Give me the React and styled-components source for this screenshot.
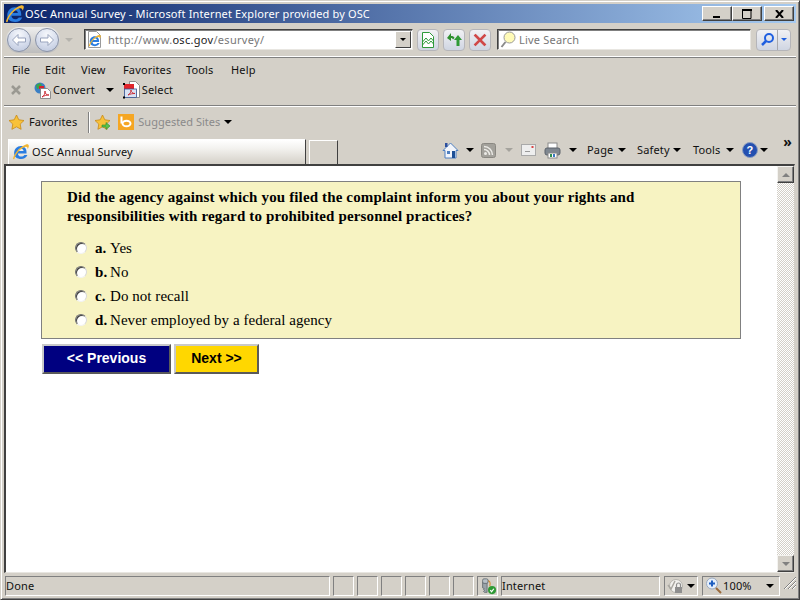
import React from "react";
import styled, { createGlobalStyle } from "styled-components";

const chrome = "#d4d0c8";
const uiFont = `"Noto Sans", "DejaVu Sans", sans-serif`;

const Global = createGlobalStyle`
  html, body { margin: 0; padding: 0; background: ${chrome}; overflow: hidden; }
  * { box-sizing: border-box; }
`;

const Frame = styled.div`
  width: 800px;
  height: 600px;
  background: ${chrome};
  display: flex;
  flex-direction: column;
  font-family: ${uiFont};
  font-size: 11px;
  letter-spacing: 0.15px;
  color: #111;
  padding: 4px;
  border: 1px solid;
  border-color: ${chrome} #404040 #404040 ${chrome};
  box-shadow: inset 1px 1px 0 #fff, inset -1px -1px 0 #808080;
`;

/* title bar */
const TitleBar = styled.div`
  height: 19px;
  flex: none;
  display: flex;
  align-items: center;
  margin: -1px -1px 0;
  padding: 0 2px 0 2px;
  background: linear-gradient(90deg, #0a246a 0%, #a6caf0 100%);
  color: #fff;
  font-size: 11px;
`;
const TitleText = styled.span`
  margin-left: 1px;
  flex: 1;
  white-space: nowrap;
`;
const WinButton = styled.div`
  width: ${({ $w }) => $w}px;
  height: 15px;
  margin-left: ${({ $gap }) => $gap || 0}px;
  background: ${chrome};
  border: 1px solid;
  border-color: #fff #404040 #404040 #fff;
  box-shadow: inset -1px -1px 0 #808080;
  display: flex;
  align-items: center;
  justify-content: center;
`;

/* address row */
const AddressRow = styled.div`
  height: 34px;
  flex: none;
  display: flex;
  align-items: center;
  margin: 0 -1px;
  padding: 0 0 0 2px;
  border-bottom: 1px solid #fff;
  box-shadow: 0 1px 0 #808080;
`;
const NavCapsule = styled.div`
  width: 54px;
  height: 26px;
  border-radius: 13px;
  background: linear-gradient(#eeeeee, #bdbdbd);
  display: flex;
  align-items: center;
  justify-content: space-between;
  padding: 0 1px;
  flex: none;
`;
const NavCircle = styled.div`
  width: 24px;
  height: 24px;
  border-radius: 50%;
  border: 1px solid #8a93a8;
  background: radial-gradient(circle at 50% 25%, #f6f8fc 0%, #d5dcec 55%, #b9c3da 100%);
  display: flex;
  align-items: center;
  justify-content: center;
`;
const SunkenField = styled.div`
  height: 21px;
  width: ${({ $w }) => $w}px;
  margin-left: ${({ $gap }) => $gap || 0}px;
  flex: none;
  background: #fff;
  border: 1px solid;
  border-color: #404040 #e8e6e1 #e8e6e1 #404040;
  box-shadow: inset 1px 1px 0 #808080;
  display: flex;
  align-items: center;
  padding-left: 2px;
`;
const UrlText = styled.span`
  margin-left: 6px;
  flex: 1;
  color: #777;
  letter-spacing: 0.3px;
  b { font-weight: 400; color: #222; }
`;
const ComboArrow = styled.div`
  width: 16px;
  height: 17px;
  background: ${chrome};
  border: 1px solid;
  border-color: #fff #404040 #404040 #fff;
  display: flex;
  align-items: center;
  justify-content: center;
  margin-right: 1px;
`;
const SquareButton = styled.div`
  width: 22px;
  height: 22px;
  margin-left: ${({ $gap }) => $gap || 4}px;
  flex: none;
  border: 1px solid #b5b5b9;
  border-radius: 4px;
  background: linear-gradient(#f1f1f4, #cfd5e2);
  display: flex;
  align-items: center;
  justify-content: center;
`;
const SearchText = styled.span`
  margin-left: 3px;
  color: #777;
  letter-spacing: 0.2px;
`;
const SearchButton = styled.div`
  width: 35px;
  height: 22px;
  margin-left: 5px;
  flex: none;
  border: 1px solid #b5b5b9;
  border-radius: 4px;
  background: linear-gradient(#f1f1f4, #cfd5e2);
  display: grid;
  grid-template-columns: 20px 1fr;
  & > div {
    display: flex;
    align-items: center;
    justify-content: center;
  }
  & > div + div { border-left: 1px solid #a8a8ac; }
`;

/* menu + command rows */
const MenuRow = styled.div`
  height: 23px;
  flex: none;
  display: flex;
  align-items: center;
  margin-top: 1px;
  padding: 0 0 0 7px;
`;
const MenuItem = styled.span`
  width: ${({ $w }) => $w}px;
  flex: none;
  color: #111;
`;
const ConvertRow = styled.div`
  height: 25px;
  flex: none;
  display: flex;
  align-items: center;
  padding: 0 0 6px 7px;
  margin: 0 -1px;
  border-bottom: 1px solid #808080;
  box-shadow: 0 1px 0 #fff;
`;
const ToolLabel = styled.span`
  margin-left: ${({ $gap }) => $gap ?? 2}px;
  margin-top: -2px;
`;
const Spacer = styled.span`
  width: ${({ $w }) => $w}px;
  flex: none;
`;
const FavRow = styled.div`
  height: 32px;
  flex: none;
  display: flex;
  align-items: center;
  padding: 0 0 0 3px;
`;
const Divider = styled.div`
  width: 1px;
  height: 21px;
  margin: 0 5px 0 11px;
  background: #808080;
  box-shadow: 1px 0 0 #fff;
`;
const MutedLabel = styled.span`
  margin-left: 4px;
  margin-top: -2px;
  color: #8a8a8a;
  letter-spacing: 0;
`;

/* tab row with the command bar on its right side */
const TabRow = styled.div`
  height: 26px;
  flex: none;
  display: flex;
  align-items: flex-end;
  padding-left: 3px;
`;
const Tab = styled.div`
  width: 298px;
  height: 25px;
  flex: none;
  display: flex;
  align-items: center;
  padding: 0 0 0 4px;
  border-top: 1px solid #fff;
  border-right: 1px solid #404040;
  border-left: 1px solid #fff;
  background: linear-gradient(#fff 0%, #f3f2ef 35%, ${chrome} 100%);
`;
const NewTab = styled.div`
  width: 29px;
  height: 24px;
  margin-left: 3px;
  flex: none;
  border-top: 1px solid #fff;
  border-left: 1px solid #fff;
  border-right: 1px solid #404040;
`;
const CommandBar = styled.div`
  flex: 1;
  height: 26px;
  display: flex;
  align-items: center;
  padding: 0 0 2px 104px;
  position: relative;
`;
const CommandLabel = styled.span`
  width: ${({ $w }) => $w}px;
  flex: none;
  margin-left: ${({ $gap }) => $gap || 0}px;
  margin-top: -2px;
`;
const Arrow = styled.span`
  flex: none;
  width: 0;
  height: 0;
  margin-left: ${({ $gap }) => $gap || 0}px;
  border-left: ${({ $size }) => $size || 4}px solid transparent;
  border-right: ${({ $size }) => $size || 4}px solid transparent;
  border-top: ${({ $size }) => $size || 4}px solid ${({ $color }) => $color || "#000"};
`;
const Overflow = styled.span`
  position: absolute;
  right: 3px;
  top: -2px;
  font-size: 14px;
  font-weight: 700;
  line-height: 12px;
`;

/* page viewport */
const Viewport = styled.div`
  flex: 1;
  min-height: 0;
  display: flex;
  background: #fff;
  margin-left: -1px;
  border-top: 2px solid #404040;
  border-left: 2px solid #404040;
  border-right: 1px solid ${chrome};
  border-bottom: 1px solid #e8e6e1;
`;
const Page = styled.main`
  flex: 1;
  padding: 15px 0 0 35px;
  font-family: "Liberation Serif", "Times New Roman", serif;
  font-size: 15px;
  letter-spacing: 0.05px;
  color: #000;
`;
const QuestionCard = styled.section`
  width: 700px;
  height: 158px;
  background: #f7f3c2;
  border: 1px solid #808080;
  padding: 6px 0 0 25px;
`;
const Question = styled.h2`
  margin: 0 0 10px;
  font-size: 15px;
  line-height: 19px;
  font-weight: 700;
  letter-spacing: 0.14px;
`;
const OptionRow = styled.label`
  display: flex;
  align-items: center;
  height: 24px;
  padding-left: 8px;
`;
const Radio = styled.span`
  width: 12px;
  height: 12px;
  border-radius: 50%;
  background: #fff;
  border: 1px solid;
  border-color: #6f6f6f #d8d8d8 #f2f2f2 #6f6f6f;
  box-shadow: inset 1px 1px 0 #404040;
  margin-right: 8px;
  flex: none;
`;
const OptionKey = styled.b`
  min-width: 15px;
`;
const ButtonRow = styled.div`
  display: flex;
  margin-top: 5px;
  padding-left: 1px;
  gap: 3px;
`;
const SurveyButton = styled.button`
  width: ${({ $w }) => $w}px;
  height: 30px;
  padding: 0 0 2px;
  background: ${({ $primary }) => ($primary ? "#000080" : "#ffd700")};
  color: ${({ $primary }) => ($primary ? "#fff" : "#000")};
  border: 2px solid;
  border-color: #c9c9c9 #5a5a5a #5a5a5a #c9c9c9;
  font-family: "Liberation Sans", Arial, sans-serif;
  font-size: 14px;
  font-weight: 700;
`;

const ScrollBar = styled.div`
  width: 17px;
  flex: none;
  display: flex;
  flex-direction: column;
  background: repeating-conic-gradient(#fff 0 25%, ${chrome} 0 50%) 0 0 / 2px 2px;
`;
const ScrollButton = styled.div`
  height: 17px;
  background: ${chrome};
  border: 1px solid;
  border-color: #f4f3f0 #404040 #404040 #f4f3f0;
  box-shadow: inset -1px -1px 0 #808080;
  display: flex;
  align-items: center;
  justify-content: center;
`;
const ScrollTrack = styled.div`
  flex: 1;
`;
const ScrollArrow = styled.span`
  width: 0;
  height: 0;
  border-left: 4px solid transparent;
  border-right: 4px solid transparent;
  ${({ $up }) => ($up ? "border-bottom: 4px solid #808080;" : "border-top: 4px solid #808080;")}
`;

/* status bar */
const StatusBar = styled.footer`
  height: 20px;
  flex: none;
  display: flex;
  align-items: stretch;
  gap: 3px;
  margin: 3px 0 -1px;
`;
const Cell = styled.div`
  width: ${({ $w }) => $w}px;
  flex: none;
  margin-left: ${({ $gap }) => $gap || 0}px;
  height: 20px;
  display: flex;
  align-items: center;
  padding-left: ${({ $pad }) => $pad || 0}px;
  border: 1px solid;
  border-color: #808080 #fff #fff #808080;
  white-space: nowrap;
`;
const Grip = styled.div`
  width: 16px;
  margin-left: auto;
  height: 20px;
  flex: none;
`;

const IEMark = () => (
  <>
    <path d="M2 9.200c0-4 2.700-6.600 6-6.600 3 0 5 2.200 5 5.400v1.300H5.300c.2 1.700 1.300 2.800 3 2.800 1.200 0 2.100-.5 2.800-1.400h2.700c-1 2.400-3 3.600-5.600 3.600C4.600 14.300 2 12.500 2 9.200zm3.400-2h5c-.2-1.300-1.100-2.200-2.400-2.200s-2.300.9-2.600 2.200z" fill="#2a7de1" />
    <path d="M1 13.800C2.500 8.500 7.500 3 12.500 1.300c1.700-.6 2.800.2 2.500 1.800-.1.800-.5 1.600-1 2.400.1-1.400-.6-2.300-2-2C8 4.300 3.500 9 2.200 14.300c-.5.400-1 .1-1.200-.5z" fill="#f2b632" />
  </>
);
const IELogo = ({ size = 16 }) => (
  <svg width={size} height={size} viewBox="1 1 14.200 14">
    <IEMark />
  </svg>
);

const NavArrow = ({ flip }) => (
  <svg width="16" height="14" viewBox="0 0 16 14" style={flip ? { transform: "scaleX(-1)" } : undefined}>
    <path d="M7 1.500 1.500 7 7 12.500V9h7.500V5H7z" fill="#fff" stroke="#98a3bd" strokeWidth="1" />
  </svg>
);

const PageIcon = () => (
  <svg width="15" height="17" viewBox="0 0 15 17">
    <path d="M1.500.5h8l4 4v12h-12z" fill="#fff" stroke="#9a9a9a" />
    <g transform="translate(1 3) scale(.85)"><IEMark /></g>
  </svg>
);

const Star = ({ size = 17, arrow }) => (
  <svg width={size} height={size} viewBox="0 0 17 17">
    <path d="M8.500 1l2.300 4.800 5.200.7-3.800 3.600.9 5.200-4.600-2.500-4.600 2.500.9-5.200L1 6.500l5.200-.7z" fill="#f8c23a" stroke="#c98a14" strokeWidth=".8" />
    {arrow && <path d="M8 11h4V8.500l4 3.500-4 3.500V13H8z" fill="#5cc24a" stroke="#2e8b2a" strokeWidth=".6" />}
  </svg>
);

const PdfGlobe = () => (
  <svg width="17" height="17" viewBox="0 0 17 17">
    <circle cx="6" cy="6" r="5.500" fill="#3b7fc4" />
    <path d="M2 3l4-2 2 2-2 3-3 1zM7 8l3 1-1 2.500H7z" fill="#3aa54a" />
    <rect x="5" y="4" width="5" height="3" fill="#d8232a" />
    <path d="M6.500 6.500h7l3 3v7h-10z" fill="#fff" stroke="#777" strokeWidth=".8" />
    <path d="M8 15c2-1 3-3 3-6 0 3 1.500 4 4 4-2.500 0-5 .7-7 2z" fill="none" stroke="#c8222a" strokeWidth=".9" />
  </svg>
);
const PdfSelect = () => (
  <svg width="17" height="18" viewBox="0 0 17 18">
    <path d="M6.500.5h6l4 4v12h-10z" fill="#fff" stroke="#777" strokeWidth=".8" />
    <rect x="1" y="3" width="10" height="5" fill="#e0242a" />
    <rect x="1.500" y="8" width="12" height="8.500" fill="#d9e2f3" stroke="#33508f" strokeWidth=".8" />
    <path d="M5 14c2-1 3-3 3-5 0 2 1.500 3.500 4 3.500-2.500 0-5 .5-7 1.500z" fill="none" stroke="#c8222a" strokeWidth=".9" />
    <rect x="0" y="15.500" width="2" height="2" fill="#000" />
    <rect x="0" y="2" width="2" height="2" fill="#000" />
  </svg>
);
const BingIcon = () => (
  <svg width="16" height="16" viewBox="0 0 16 16">
    <rect width="16" height="16" fill="#f5a623" />
    <ellipse cx="8.500" cy="9.500" rx="4" ry="2.800" fill="none" stroke="#fff" strokeWidth="2" />
    <rect x="2.500" y="2.500" width="2" height="7" fill="#fff" />
  </svg>
);

const HomeIcon = () => (
  <svg width="17" height="17" viewBox="0 0 17 17">
    <path d="M8.500 1 16 8.500h-2V16H3V8.500H1z" fill="#f2f5fb" stroke="#4f7fc0" strokeWidth="1" />
    <rect x="3" y="1" width="2.500" height="4" fill="#2c4f9e" />
    <rect x="5" y="9" width="3" height="3" fill="#4f7fc0" />
    <rect x="10" y="9" width="3" height="7" fill="#1d4f96" />
  </svg>
);
const RssIcon = () => (
  <svg width="15" height="15" viewBox="0 0 15 15">
    <rect x=".5" y=".5" width="14" height="14" rx="2" fill="#a3a19b" stroke="#8a8882" />
    <circle cx="4.500" cy="10.500" r="1.500" fill="#ecebe7" />
    <path d="M3 6.500a5.500 5.500 0 0 1 5.500 5.500M3 3.500A8.500 8.500 0 0 1 11.500 12" fill="none" stroke="#ecebe7" strokeWidth="1.500" />
  </svg>
);
const MailIcon = () => (
  <svg width="15" height="12" viewBox="0 0 15 12">
    <rect x=".5" y=".5" width="14" height="11" fill="#eeeeee" stroke="#a9a9a9" />
    <rect x="4" y="7" width="5" height="1" fill="#999" />
    <rect x="10.500" y="2" width="2" height="2" fill="#d84545" />
  </svg>
);
const PrintIcon = () => (
  <svg width="17" height="17" viewBox="0 0 17 17">
    <rect x="4" y="1" width="9" height="6" fill="#fff" stroke="#8a8a8a" />
    <rect x="1" y="6" width="15" height="7" rx="2" fill="#7f8790" stroke="#5c636b" />
    <rect x="4" y="11" width="9" height="5" fill="#fff" stroke="#8a8a8a" />
    <rect x="6" y="12" width="2" height="3" fill="#2f8f4f" />
    <rect x="9" y="12" width="2" height="3" fill="#3a76c4" />
  </svg>
);
const HelpIcon = () => (
  <svg width="16" height="16" viewBox="0 0 16 16">
    <circle cx="8" cy="8" r="7.500" fill="#2450b0" stroke="#8b9dc0" />
    <text x="8" y="12" fontSize="11" fontWeight="700" fontFamily="Liberation Sans" fill="#fff" textAnchor="middle">?</text>
  </svg>
);
const MagnifierBlue = () => (
  <svg width="15" height="15" viewBox="0 0 15 15">
    <circle cx="9" cy="6" r="4" fill="none" stroke="#1f5fe0" strokeWidth="2" />
    <path d="M6 9l-4 4" stroke="#1f5fe0" strokeWidth="2.500" />
  </svg>
);
const MagnifierLive = () => (
  <svg width="16" height="18" viewBox="0 0 16 18">
    <circle cx="9.500" cy="6.500" r="5.500" fill="#fffbb8" stroke="#9a9a9a" />
    <path d="M5.500 11 1.500 16" stroke="#8a8a8a" strokeWidth="2" />
  </svg>
);
const CompatIcon = () => (
  <svg width="14" height="16" viewBox="0 0 14 16">
    <path d="M1.500.5h7l4 4v11h-11z" fill="#fff" stroke="#2e9a3a" />
    <path d="M1.500 10 5 6l2.500 3L10 6l2.500 3M1.500 13 5 9l2.500 3L10 9l2.500 3" fill="none" stroke="#2e9a3a" />
  </svg>
);
const RefreshIcon = () => (
  <svg width="17" height="15" viewBox="0 0 17 15">
    <path d="M1 6l4-5v3c2 0 3 .5 3.500 2L7 7.500C6.500 6.500 6 6 5 6v3z" fill="#2f8f2f" />
    <path d="M16 8l-4-5-4 5h2.500v6h3V8z" fill="#2f9a35" />
  </svg>
);
const StopIcon = () => (
  <svg width="14" height="14" viewBox="0 0 14 14">
    <path d="M2.500 2.500l9 9M11.500 2.500l-9 9" stroke="#d04848" strokeWidth="2.600" strokeLinecap="square" />
  </svg>
);
const KeyIcon = () => (
  <svg width="20" height="19" viewBox="0 0 20 19">
    <path d="M4 5h5v11H6l-1-1 1-1-1-1 1-1-2-1z" fill="#9aa2a8" stroke="#555d63" strokeWidth=".8" />
    <path d="M9 3c3 0 4 2 3 6" fill="none" stroke="#d98a2a" strokeWidth="1.200" />
    <rect x="4" y="1" width="6" height="5" rx="1.500" fill="#b8c0c6" stroke="#555d63" strokeWidth=".8" />
    <circle cx="14.500" cy="13.500" r="4.500" fill="#2f9a35" />
    <path d="M12.500 13.500l1.500 1.800 2.500-3.300" fill="none" stroke="#fff" strokeWidth="1.300" />
  </svg>
);
const LockIcon = () => (
  <svg width="18" height="16" viewBox="0 0 18 16">
    <circle cx="9" cy="8" r="6.500" fill="#f2f1ee" stroke="#b5b3ad" />
    <path d="M1 7l3 4 4-8" fill="none" stroke="#a9a7a1" strokeWidth="1.500" />
    <rect x="8" y="9" width="7" height="6" fill="#8e8e8e" />
    <path d="M9.500 9V7a2 2 0 0 1 4 0v2" fill="none" stroke="#8e8e8e" strokeWidth="1.200" />
  </svg>
);
const ZoomIcon = () => (
  <svg width="18" height="18" viewBox="0 0 18 18">
    <circle cx="7" cy="6.500" r="5.500" fill="#e6effa" stroke="#9aa9bf" />
    <path d="M7 3.500v6M4 6.500h6" stroke="#1f5fc0" strokeWidth="2" />
    <path d="M11 11l5 5" stroke="#9a6a3a" strokeWidth="2" />
  </svg>
);
const GripIcon = () => (
  <svg width="14" height="14" viewBox="0 0 14 14">
    <path d="M13 1 1 13M13 5 5 13M13 9 9 13" stroke="#808080" strokeWidth="1" />
    <path d="M13 2 2 13M13 6 6 13M13 10 10 13" stroke="#fff" strokeWidth="1" />
  </svg>
);

export default function App() {
  return (
    <Frame>
      <Global />
      <TitleBar>
        <IELogo size={18} />
        <TitleText>OSC Annual Survey - Microsoft Internet Explorer provided by OSC</TitleText>
        <WinButton $w={30}>
          <svg width="8" height="9" viewBox="0 0 8 9"><rect y="7" width="7" height="2" /></svg>
        </WinButton>
        <WinButton $w={30}>
          <svg width="10" height="10" viewBox="0 0 10 10"><path d="M.5 1.500h8.500v8H.5z" fill="none" stroke="#000" /><rect width="10" height="2" /></svg>
        </WinButton>
        <WinButton $w={30} $gap={2}>
          <svg width="9" height="8" viewBox="0 0 9 8"><path d="M1 0l7 8M8 0 1 8" stroke="#000" strokeWidth="2" /></svg>
        </WinButton>
      </TitleBar>

      <AddressRow>
        <NavCapsule>
          <NavCircle><NavArrow /></NavCircle>
          <NavCircle><NavArrow flip /></NavCircle>
        </NavCapsule>
        <Arrow $gap={5} $color="#b5b3ad" />
        <SunkenField $w={329} $gap={11}>
          <PageIcon />
          <UrlText>http://www.<b>osc.gov</b>/esurvey/</UrlText>
          <ComboArrow><Arrow $size={3} /></ComboArrow>
        </SunkenField>
        <SquareButton><CompatIcon /></SquareButton>
        <SquareButton><RefreshIcon /></SquareButton>
        <SquareButton><StopIcon /></SquareButton>
        <SunkenField $w={254} $gap={6}>
          <MagnifierLive />
          <SearchText>Live Search</SearchText>
        </SunkenField>
        <SearchButton>
          <div><MagnifierBlue /></div>
          <div><Arrow $size={3} $color="#1f5fe0" /></div>
        </SearchButton>
      </AddressRow>

      <MenuRow>
        <MenuItem $w={33}>File</MenuItem>
        <MenuItem $w={36}>Edit</MenuItem>
        <MenuItem $w={42}>View</MenuItem>
        <MenuItem $w={63}>Favorites</MenuItem>
        <MenuItem $w={45}>Tools</MenuItem>
        <MenuItem $w={40}>Help</MenuItem>
      </MenuRow>
      <ConvertRow>
        <svg width="11" height="10" viewBox="0 0 11 10"><path d="M1 1l8 8M9 1 1 9" stroke="#9b9992" strokeWidth="2.500" /></svg>
        <Spacer $w={12} />
        <PdfGlobe />
        <ToolLabel>Convert</ToolLabel>
        <Arrow $gap={11} />
        <Spacer $w={9} />
        <PdfSelect />
        <ToolLabel $gap={2}>Select</ToolLabel>
      </ConvertRow>

      <FavRow>
        <Star />
        <ToolLabel $gap={4}>Favorites</ToolLabel>
        <Divider />
        <Star arrow />
        <Spacer $w={7} />
        <BingIcon />
        <MutedLabel>Suggested Sites</MutedLabel>
        <Arrow $gap={4} />
      </FavRow>

      <TabRow>
        <Tab>
          <IELogo size={16} />
          <ToolLabel $gap={3}>OSC Annual Survey</ToolLabel>
        </Tab>
        <NewTab />
        <CommandBar>
          <HomeIcon />
          <Arrow $gap={7} />
          <Spacer $w={7} />
          <RssIcon />
          <Arrow $gap={9} $color="#a5a39d" />
          <Spacer $w={8} />
          <MailIcon />
          <Spacer $w={8} />
          <PrintIcon />
          <Arrow $gap={8} />
          <CommandLabel $w={31} $gap={10}>Page</CommandLabel>
          <Arrow />
          <CommandLabel $w={36} $gap={11}>Safety</CommandLabel>
          <Arrow />
          <CommandLabel $w={33} $gap={12}>Tools</CommandLabel>
          <Arrow />
          <Spacer $w={8} />
          <HelpIcon />
          <Arrow $gap={2} />
          <Overflow>»</Overflow>
        </CommandBar>
      </TabRow>

      <Viewport>
        <Page>
          <QuestionCard>
            <Question>
              Did the agency against which you filed the complaint inform you about your rights and
              <br />
              responsibilities with regard to prohibited personnel practices?
            </Question>
            <OptionRow><Radio /><OptionKey>a.</OptionKey>Yes</OptionRow>
            <OptionRow><Radio /><OptionKey>b.</OptionKey>No</OptionRow>
            <OptionRow><Radio /><OptionKey>c.</OptionKey>Do not recall</OptionRow>
            <OptionRow><Radio /><OptionKey>d.</OptionKey>Never employed by a federal agency</OptionRow>
          </QuestionCard>
          <ButtonRow>
            <SurveyButton $primary $w={129}>&lt;&lt; Previous</SurveyButton>
            <SurveyButton $w={85}>Next &gt;&gt;</SurveyButton>
          </ButtonRow>
        </Page>
        <ScrollBar>
          <ScrollButton><ScrollArrow $up /></ScrollButton>
          <ScrollTrack />
          <ScrollButton><ScrollArrow /></ScrollButton>
        </ScrollBar>
      </Viewport>

      <StatusBar>
        <Cell $w={325}><ToolLabel $gap={0}>Done</ToolLabel></Cell>
        <Cell $w={21} />
        <Cell $w={21} />
        <Cell $w={21} />
        <Cell $w={21} />
        <Cell $w={21} />
        <Cell $w={21} />
        <Cell $w={21} $pad={1}><KeyIcon /></Cell>
        <Cell $w={159}><ToolLabel $gap={0}>Internet</ToolLabel></Cell>
        <Cell $w={34} $pad={2} $gap={1}>
          <LockIcon />
          <Arrow $gap={2} />
        </Cell>
        <Cell $w={78} $pad={2} $gap={1}>
          <ZoomIcon />
          <ToolLabel $gap={0}>100%</ToolLabel>
          <Arrow $gap={14} />
        </Cell>
        <Grip><GripIcon /></Grip>
      </StatusBar>
    </Frame>
  );
}
